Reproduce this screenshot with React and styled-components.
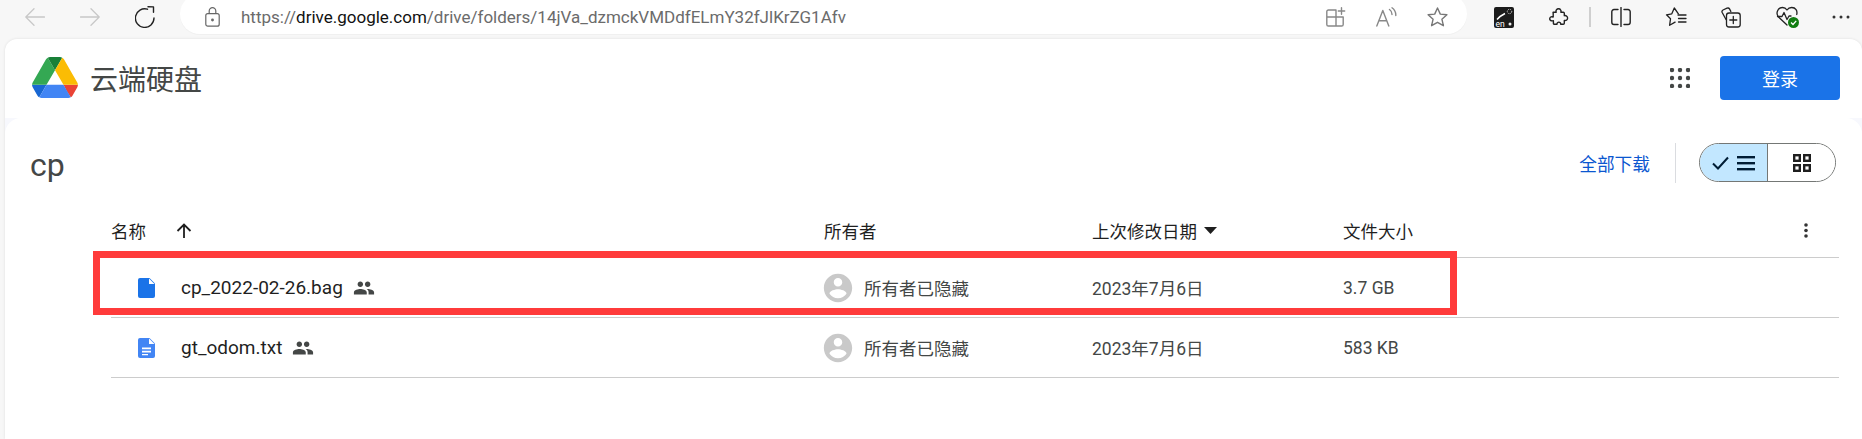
import React from "react";
import styled, { createGlobalStyle } from "styled-components";

const Global = createGlobalStyle`
  html, body { margin: 0; padding: 0; background: #f7f7f7; }
  body { font-family: Roboto, "Noto Sans CJK SC", sans-serif; color: #1f1f1f; }
`;

const Page = styled.div`
  width: 1862px; height: 439px; overflow: hidden;
  display: flex; flex-direction: column; background: #f7f7f7;
`;

const Chrome = styled.div`
  height: 39px; flex: none; display: flex; align-items: flex-start; padding-left: 25px;
`;
const NavGroup = styled.div`
  display: flex; gap: 35px; height: 34px; align-items: center;
`;
const AddressBar = styled.div`
  width: 1287px; height: 40px; margin: -6px 0 0 25px; flex: none; box-sizing: border-box;
  background: #fff; border-radius: 20px; padding: 6px 19px 0 25px;
  display: flex; align-items: center; box-shadow: 0 1px 1px rgba(0,0,0,.03);
`;
const Url = styled.div`
  margin-left: 21px; flex: 1; font-size: 17px; color: #6b6b6b; white-space: nowrap;
  font-family: Roboto, sans-serif;
  b { font-weight: 400; color: #111; }
`;
const AddressTools = styled.div`
  display: flex; gap: 30px; align-items: center;
`;
const Tools = styled.div`
  margin-left: 27px; height: 34px; display: flex; align-items: center; gap: 35px;
`;
const ToolDivider = styled.div`
  width: 1.5px; height: 20px; background: #cfcfcf; margin: 0 -15px;
`;

const Card = styled.div`
  flex: 1; margin-left: 5px; background: #fff; border-radius: 12px 12px 0 0;
  display: flex; flex-direction: column; box-shadow: 0 0 3px rgba(0,0,0,.1);
`;
const TopBar = styled.header`
  height: 79px; flex: none; box-sizing: border-box; display: flex; align-items: center;
  padding: 0 22px 2px 27px;
`;
const Brand = styled.div`
  display: flex; align-items: center; gap: 12px; font-size: 28px; color: #444746; flex: 1;
`;
const SignIn = styled.button`
  width: 120px; height: 44px; border: 0; border-radius: 4px; background: #1a73e8; color: #fff;
  font: 400 18px Roboto, "Noto Sans CJK SC", sans-serif; margin-left: 30px;
`;
const ListWrap = styled.div`
  flex: 1; background: #f7f8fd; display: flex;
`;
const Panel = styled.main`
  flex: 1; background: #fff; border-radius: 16px 16px 0 0; padding-top: 25px;
`;
const TitleRow = styled.div`
  display: flex; align-items: center; height: 39px; padding: 0 26px 0 25px;
`;
const Title = styled.h1`
  margin: 0 0 -4px; flex: 1; font-weight: 400; font-size: 32px; color: #444746;
  font-family: Roboto, sans-serif;
`;
const DownloadAll = styled.a`
  font-size: 17.7px; color: #0b57d0; margin-right: 25px;
`;
const VDivider = styled.div`
  width: 1px; height: 40px; background: #dadce0; margin-right: 23px;
`;
const Toggle = styled.div`
  width: 137px; height: 39px; box-sizing: border-box; border: 1px solid #747775; border-radius: 20px;
  overflow: hidden; display: grid; grid-template-columns: 68px 1fr;
`;
const ToggleSide = styled.div`
  display: flex; align-items: center; justify-content: center; gap: 8px;
  background: ${p => (p.$on ? "#c2e7ff" : "#fff")};
  border-right: ${p => (p.$on ? "1px solid #747775" : "0")};
`;
const Table = styled.div`
  position: relative; margin: 23px 23px 0 106px;
`;
const HeadRow = styled.div`
  height: 53px; box-sizing: border-box; border-bottom: 1px solid #ccc;
  display: grid; grid-template-columns: 713px 268px 251px 1fr auto; align-items: center;
  font-size: 17.5px; color: #1f1f1f; padding-bottom: 1px;
`;
const Row = styled.div`
  height: 60px; box-sizing: border-box; border-bottom: 1px solid #ccc;
  display: grid; grid-template-columns: 713px 268px 251px 1fr; align-items: center;
  font-size: 17.5px; color: #444746;
`;
const HeadName = styled.div`
  display: flex; align-items: center; gap: 30px;
`;
const HeadCaret = styled.div`
  display: flex; align-items: center; gap: 7px;
`;
const HeadMore = styled.div`
  display: flex; padding-right: 31px;
`;
const NameCell = styled.div`
  display: flex; align-items: center; padding-left: 27px;
`;
const FileName = styled.span`
  margin: 0 10px 0 26px; font-size: 19px; color: #1f1f1f; font-family: Roboto, sans-serif;
`;
const OwnerCell = styled.div`
  display: flex; align-items: center; gap: 9px; margin-left: -3px;
`;
const Highlight = styled.div`
  position: absolute; left: -18px; top: 46px; width: 1364px; height: 64px;
  box-sizing: border-box; border: 7px solid #ff3b3b; pointer-events: none;
`;

const S = { fill: "none", stroke: "currentColor", strokeLinecap: "round", strokeLinejoin: "round" };

const Back = () => (
  <svg width="20" height="20" viewBox="0 0 20 20" style={{ color: "#c8c8c8" }} {...S} strokeWidth="1.3"><path d="M19.5 10H.8M9 1.8.8 10 9 18.2" /></svg>
);
const Forward = () => (
  <svg width="20" height="20" viewBox="0 0 20 20" style={{ color: "#c8c8c8" }} {...S} strokeWidth="1.3"><path d="M.5 10h18.7M11 1.8l8.2 8.2L11 18.2" /></svg>
);
const Refresh = () => (
  <svg width="20" height="22" viewBox="0 0 20 22" style={{ color: "#222" }} {...S} strokeWidth="1.4"><path d="M12.5 3.2A9.3 9.3 0 1 0 19 12" /><path d="M13 .8 18.5.9v5.4" /></svg>
);
const Lock = () => (
  <svg width="15" height="20" viewBox="0 0 15 20" style={{ color: "#666" }} {...S} strokeWidth="1.2"><rect x=".8" y="6.6" width="13.4" height="12.6" rx="2" /><path d="M4.2 6.5V4a3.3 3.3 0 0 1 6.6 0v2.5" /><circle cx="7.5" cy="13" r=".8" fill="#666" /></svg>
);
const AppsAdd = () => (
  <svg width="20" height="20" viewBox="0 0 20 20" style={{ color: "#888" }} {...S} strokeWidth="1.4"><path d="M10 3H2.4A1.6 1.6 0 0 0 .8 4.6v12.8A1.6 1.6 0 0 0 2.4 19h13.2a1.6 1.6 0 0 0 1.6-1.6V10H.8M10 3v16M15.5.8v6.4M12.3 4h6.4" /></svg>
);
const ReadAloud = () => (
  <svg width="21" height="20" viewBox="0 0 21 20" style={{ color: "#888" }} {...S} strokeWidth="1.4"><path d="M.8 19 6.8 3.5 12.8 19M2.8 13.800h8M13.5 2.5a6 6 0 0 1 2.5 5M16 .8a9 9 0 0 1 3.8 7.700" /></svg>
);
const Star = () => (
  <svg width="21" height="20" viewBox="0 0 21 20" style={{ color: "#777" }} {...S} strokeWidth="1.4"><path d="m10.5 1 2.8 6.100 6.600.7-5 4.400 1.500 6.500-5.900-3.400-5.900 3.400 1.500-6.500-5-4.400 6.600-.7z" /></svg>
);
const Extension = () => (
  <svg width="20" height="21" viewBox="0 0 20 21">
    <rect width="20" height="21" rx="2" fill="#1c1c1c" />
    <path d="M3 12.500c2-2.500 4-4 8-6" stroke="#fff" strokeWidth="1.500" fill="none" />
    <circle cx="15.500" cy="4.500" r="2.200" fill="none" stroke="#ddd" strokeWidth="1" strokeDasharray="1 1" />
    <circle cx="16" cy="17" r="1.500" fill="#eee" />
    <text x="1.500" y="19.500" fontSize="8.500" fill="#fff" fontFamily="Roboto, sans-serif">en</text>
  </svg>
);
const PuzzleIcon = () => (
  <svg width="20" height="20" viewBox="0 0 20 20" style={{ color: "#222" }} {...S} strokeWidth="1.4"><path d="M4.200 5.200h3a2.600 2.600 0 0 1 .2-2.400c1-1.400 3.400-1.400 4.200 0a2.600 2.600 0 0 1 .2 2.400h2.500a1 1 0 0 1 1 1v2.500a2.500 2.500 0 0 1 2.400.5c1.300 1.100 1.100 3.200-.2 4a2.600 2.600 0 0 1-2.200.2v2.900a1 1 0 0 1-1 1h-2.600c.4-2.900-4-2.900-3.700 0H5.400a1 1 0 0 1-1-1v-2.600c-2.600.7-4-.8-3.600-2.400.3-1.300 1.900-2 3.400-1.300V6.200a1 1 0 0 1 0-1z" /></svg>
);
const Split = () => (
  <svg width="20" height="20" viewBox="0 0 20 20" style={{ color: "#222" }} {...S} strokeWidth="1.4"><path d="M7 2.500H3A2.200 2.200 0 0 0 .8 4.700v10.600A2.200 2.200 0 0 0 3 17.500h4M13 2.500h4a2.200 2.200 0 0 1 2.200 2.200v10.600a2.200 2.200 0 0 1-2.200 2.200h-4M10 .6v18.800" /></svg>
);
const Favorites = () => (
  <svg width="20" height="20" viewBox="0 0 20 20" style={{ color: "#222", overflow: "visible" }} {...S} strokeWidth="1.3"><path d="M12.400 6.800 8.300 1 5.800 6.800.5 7.800l4 4-.9 6.500 5.500-3.200" /><path d="M12 8h8M12.500 11.500H20M12.500 15H20" /></svg>
);
const Collections = () => (
  <svg width="20" height="21" viewBox="0 0 20 21" style={{ color: "#222" }} {...S} strokeWidth="1.3"><path d="M5 12.500 1.200 5.500C.7 4.500 1.100 3.500 2 3l4-1.800c1-.4 2-.2 2.500.7l1.300 2.500" /><rect x="5.500" y="6" width="13.700" height="14" rx="2.500" /><path d="M12.300 9.500v7M8.800 13h7" /></svg>
);
const HeartBadge = () => (
  <svg width="24" height="24" viewBox="0 0 24 24" style={{ marginRight: -4 }}>
    <g fill="none" stroke="#222" strokeWidth="1.3" strokeLinejoin="round" strokeLinecap="round">
      <path d="M11 20 2.500 12C-.5 8.500 1.500 2.500 6.500 2.500c2 0 3.500 1 4.500 2.500 1-1.500 2.700-2.500 4.700-2.500 4 0 6 3.500 5 7" />
      <path d="M1.500 11.500h4.500l2-4 3 7 2-3.500h2" />
    </g>
    <circle cx="17.500" cy="17.500" r="5.500" fill="#107c10" />
    <path d="m15 17.500 2 2 3.200-3.600" fill="none" stroke="#fff" strokeWidth="1.300" />
  </svg>
);
const More = () => (
  <svg width="20" height="6" viewBox="0 0 20 6" fill="#333"><circle cx="3" cy="3" r="1.500" /><circle cx="10" cy="3" r="1.500" /><circle cx="17" cy="3" r="1.500" /></svg>
);
const DriveLogo = () => (
  <svg width="46" height="41" viewBox="0 0 87.300 78">
    <path d="m6.600 66.850 3.850 6.650c.8 1.400 1.950 2.500 3.300 3.300l13.750-23.800h-27.500c0 1.550.4 3.100 1.200 4.500z" fill="#1967d2" />
    <path d="m43.650 25-13.750-23.800c-1.350.8-2.500 1.900-3.300 3.300l-25.400 44a9.060 9.060 0 0 0 -1.200 4.500h27.500z" fill="#34a853" />
    <path d="m73.550 76.800c1.350-.8 2.500-1.900 3.300-3.300l1.600-2.750 7.650-13.250c.8-1.400 1.200-2.950 1.200-4.500h-27.502l5.852 11.500z" fill="#ea4335" />
    <path d="m43.650 25 13.750-23.800c-1.350-.8-2.900-1.200-4.500-1.200h-18.500c-1.600 0-3.150.45-4.500 1.200z" fill="#188038" />
    <path d="m59.800 53h-32.300l-13.750 23.800c1.350.8 2.900 1.200 4.500 1.200h50.800c1.600 0 3.150-.45 4.500-1.200z" fill="#4285f4" />
    <path d="m73.400 26.500-12.700-22c-.8-1.400-1.950-2.500-3.300-3.300l-13.750 23.800 16.150 28h27.450c0-1.550-.4-3.100-1.200-4.500z" fill="#fbbc04" />
  </svg>
);
const AppsGrid = () => (
  <svg width="20" height="20" viewBox="0 0 20 20" fill="#444746">
    {[2, 10, 18].flatMap(y => [2, 10, 18].map(x => <circle key={`${x}-${y}`} cx={x} cy={y} r="2.200" />))}
  </svg>
);
const CheckMark = () => (
  <svg width="17" height="14" viewBox="0 0 17 14" fill="none" stroke="#001d35" strokeWidth="2"><path d="m1 7.500 5 5L16 1.500" /></svg>
);
const MenuLines = () => (
  <svg width="18" height="16" viewBox="0 0 18 16" fill="#001d35"><rect width="18" height="2.400" y="1" /><rect width="18" height="2.400" y="7" /><rect width="18" height="2.400" y="13" /></svg>
);
const GridIcon = () => (
  <svg width="18" height="18" viewBox="0 0 18 18" fill="none" stroke="#1f1f1f" strokeWidth="2.400"><rect x="1.200" y="1.200" width="5.600" height="5.600" /><rect x="11.200" y="1.200" width="5.600" height="5.600" /><rect x="1.200" y="11.200" width="5.600" height="5.600" /><rect x="11.200" y="11.200" width="5.600" height="5.600" /></svg>
);
const UpArrow = () => (
  <svg width="16" height="16" viewBox="0 0 16 16" fill="none" stroke="#1f1f1f" strokeWidth="1.800"><path d="M8 15V1.500M1.500 8 8 1.500 14.500 8" /></svg>
);
const Caret = () => (
  <svg width="13" height="7" viewBox="0 0 13 7" fill="#1f1f1f"><path d="M0 0h13L6.500 7z" /></svg>
);
const Dots = () => (
  <svg width="4" height="15" viewBox="0 0 4 15" fill="#333"><circle cx="2" cy="2" r="1.800" /><circle cx="2" cy="7.500" r="1.800" /><circle cx="2" cy="13" r="1.800" /></svg>
);
const BinFile = () => (
  <svg width="17" height="20" viewBox="0 0 17 20"><path d="M2 0h9.500L17 5.500V18a2 2 0 0 1-2 2H2a2 2 0 0 1-2-2V2a2 2 0 0 1 2-2z" fill="#1a73e8" /><path d="M11 .5V6h5.500" fill="#fff" /></svg>
);
const TextFile = () => (
  <svg width="17" height="20" viewBox="0 0 17 20"><path d="M2 0h9.500L17 5.500V18a2 2 0 0 1-2 2H2a2 2 0 0 1-2-2V2a2 2 0 0 1 2-2z" fill="#4285f4" /><path d="M11 .5V6h5.500" fill="#fff" /><path d="M4 9.500h9v1.700H4zM4 12.800h9v1.700H4zM4 16h6v1.300H4z" fill="#fff" /></svg>
);
const People = () => (
  <svg width="22" height="22" viewBox="0 0 24 24" fill="#444746"><path d="M16 11c1.660 0 2.990-1.340 2.990-3S17.660 5 16 5c-1.660 0-3 1.340-3 3s1.340 3 3 3zm-8 0c1.660 0 2.990-1.340 2.990-3S9.660 5 8 5C6.340 5 5 6.340 5 8s1.340 3 3 3zm0 2c-2.330 0-7 1.170-7 3.500V19h14v-2.500c0-2.330-4.670-3.500-7-3.500zm8 0c-.29 0-.62.02-.97.05 1.160.84 1.970 1.970 1.970 3.450V19h6v-2.500c0-2.330-4.670-3.500-7-3.500z" /></svg>
);
const Avatar = () => (
  <svg width="34" height="34" viewBox="0 0 24 24" fill="#c9c9c9"><path d="M12 2C6.480 2 2 6.480 2 12s4.480 10 10 10 10-4.480 10-10S17.520 2 12 2zm0 3c1.660 0 3 1.340 3 3s-1.340 3-3 3-3-1.340-3-3 1.340-3 3-3zm0 14.200c-2.500 0-4.710-1.280-6-3.220.03-1.990 4-3.080 6-3.080 1.990 0 5.970 1.090 6 3.080-1.290 1.940-3.500 3.220-6 3.220z" /></svg>
);

const files = [
  { name: "cp_2022-02-26.bag", size: "3.7 GB", Icon: BinFile },
  { name: "gt_odom.txt", size: "583 KB", Icon: TextFile },
];

export default function App() {
  return (
    <Page>
      <Global />
      <Chrome>
        <NavGroup><Back /><Forward /><Refresh /></NavGroup>
        <AddressBar>
          <Lock />
          <Url>https://<b>drive.google.com</b>/drive/folders/14jVa_dzmckVMDdfELmY32fJlKrZG1Afv</Url>
          <AddressTools><AppsAdd /><ReadAloud /><Star /></AddressTools>
        </AddressBar>
        <Tools>
          <Extension /><PuzzleIcon /><ToolDivider /><Split /><Favorites /><Collections /><HeartBadge /><More />
        </Tools>
      </Chrome>
      <Card>
        <TopBar>
          <Brand><DriveLogo />云端硬盘</Brand>
          <AppsGrid />
          <SignIn>登录</SignIn>
        </TopBar>
        <ListWrap>
          <Panel>
            <TitleRow>
              <Title>cp</Title>
              <DownloadAll>全部下载</DownloadAll>
              <VDivider />
              <Toggle>
                <ToggleSide $on><CheckMark /><MenuLines /></ToggleSide>
                <ToggleSide><GridIcon /></ToggleSide>
              </Toggle>
            </TitleRow>
            <Table>
              <HeadRow>
                <HeadName>名称<UpArrow /></HeadName>
                <div>所有者</div>
                <HeadCaret>上次修改日期<Caret /></HeadCaret>
                <div>文件大小</div>
                <HeadMore><Dots /></HeadMore>
              </HeadRow>
              {files.map(({ name, size, Icon }) => (
                <Row key={name}>
                  <NameCell><Icon /><FileName>{name}</FileName><People /></NameCell>
                  <OwnerCell><Avatar />所有者已隐藏</OwnerCell>
                  <div>2023年7月6日</div>
                  <div>{size}</div>
                </Row>
              ))}
              <Highlight />
            </Table>
          </Panel>
        </ListWrap>
      </Card>
    </Page>
  );
}
